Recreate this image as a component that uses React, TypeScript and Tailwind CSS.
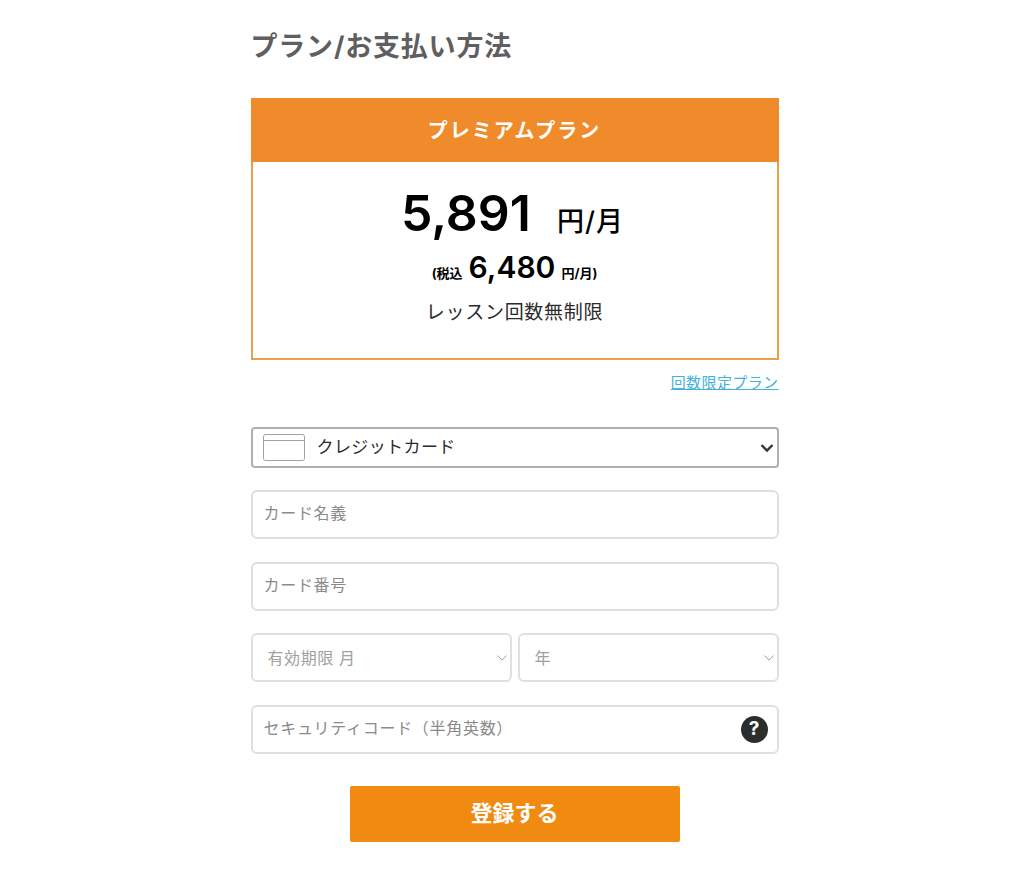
const jp = "font-['Inter','Noto_Sans_CJK_JP',sans-serif]";

function Chevron({ className }: { className: string }) {
  return (
    <svg viewBox="0 0 12 8" fill="none" stroke="currentColor" className={className}>
      <path d="M1.5 1.5 6 6.2l4.500-4.700" />
    </svg>
  );
}

function TextField({ placeholder, children }: { placeholder: string; children?: any }) {
  return (
    <div className="flex h-[49px] items-center justify-between rounded-[6px] border-2 border-[#e0e0e0] bg-white pl-[11px] pr-[9px] text-[16px] tracking-[0.7px] text-[#8a8a8a]">
      <span className="-mt-[3px]">{placeholder}</span>
      {children}
    </div>
  );
}

function SelectField({ label }: { label: string }) {
  return (
    <div className="flex h-[49px] flex-1 items-center justify-between rounded-[6px] border-2 border-[#e0e0e0] bg-white pl-[15px] pr-[2px] text-[16px] tracking-[0.6px] text-[#a0a0a0]">
      <span>{label}</span>
      <Chevron className="h-[8px] w-[12px] text-[#a0a0a0]" />
    </div>
  );
}

export default function App() {
  return (
    <div className={`${jp} flex h-[878px] justify-center bg-white pl-[5px]`}>
      <div className="w-[528px] pt-[27px]">
        <h1 className="text-[27px] leading-[40px] font-bold tracking-[0.8px] text-[#5f5f5f]">プラン/お支払い方法</h1>

        {/* plan card */}
        <div className="mt-[31px] h-[262px] border-2 border-[#e9a04c]">
          <div className="-mx-[2px] -mt-[2px] flex h-[64px] items-center justify-center bg-[#ef8b2a] pt-[2px] text-[20px] font-bold tracking-[2px] text-white">
            プレミアムプラン
          </div>
          <div className="flex flex-col items-center pt-[17px] text-black">
            <div className="mr-[4px] flex h-[68px] items-baseline">
              <span className="text-[50px] leading-[68px] font-semibold">5,891</span>
              <span className="ml-[26px] text-[27px] font-medium tracking-[1px]">円/月</span>
            </div>
            <div className="-mt-[2px] flex h-[44px] items-baseline font-bold">
              <span className="text-[13px]">(税込</span>
              <span className="ml-[6px] text-[30px] leading-[44px] font-semibold">6,480</span>
              <span className="ml-[6px] text-[13px]">円/月)</span>
            </div>
            <div className="mt-[9px] text-[19px] leading-[30px] tracking-[0.7px] text-[#2b2b2b]">レッスン回数無制限</div>
          </div>
        </div>

        <div className="mt-[12px] flex justify-end">
          <a className="text-[15px] leading-[22px] tracking-[0.4px] text-[#45b0d8] underline">回数限定プラン</a>
        </div>

        {/* payment form */}
        <div className="mt-[33px] flex h-[41px] items-center rounded-[4px] border-2 border-[#b0b0b0] bg-white pl-[10px] pr-[3px]">
          <svg viewBox="0 0 42 27" fill="none" stroke="#a0a0a0" className="h-[27px] w-[42px]">
            <rect x="0.500" y="0.500" width="41" height="26" rx="2" />
            <path d="M0.500 6.500h41" />
          </svg>
          <span className="ml-[12px] flex-1 text-[17px] tracking-[0.4px] text-[#2b2b2b]">クレジットカード</span>
          <svg viewBox="0 0 14 10" fill="none" stroke="#333333" strokeWidth="2.400" className="h-[10px] w-[14px]">
            <path d="M1.500 2 7 7.500 12.500 2" />
          </svg>
        </div>

        <div className="mt-[22px] flex flex-col gap-[22.5px]">
          <TextField placeholder="カード名義" />
          <TextField placeholder="カード番号" />
          <div className="flex gap-[6px]">
            <SelectField label="有効期限 月" />
            <SelectField label="年" />
          </div>
          <TextField placeholder="セキュリティコード（半角英数）">
            <span className="flex h-[27px] w-[27px] items-center justify-center rounded-full bg-[#2d2d2d] text-[19px] font-bold tracking-normal text-white">
              ?
            </span>
          </TextField>
        </div>

        <div className="mt-[32px] flex justify-center">
          <button className="h-[56px] w-[330px] rounded-[2px] bg-[#f08a10] text-[22px] font-bold text-white">
            登録する
          </button>
        </div>
      </div>
    </div>
  );
}
